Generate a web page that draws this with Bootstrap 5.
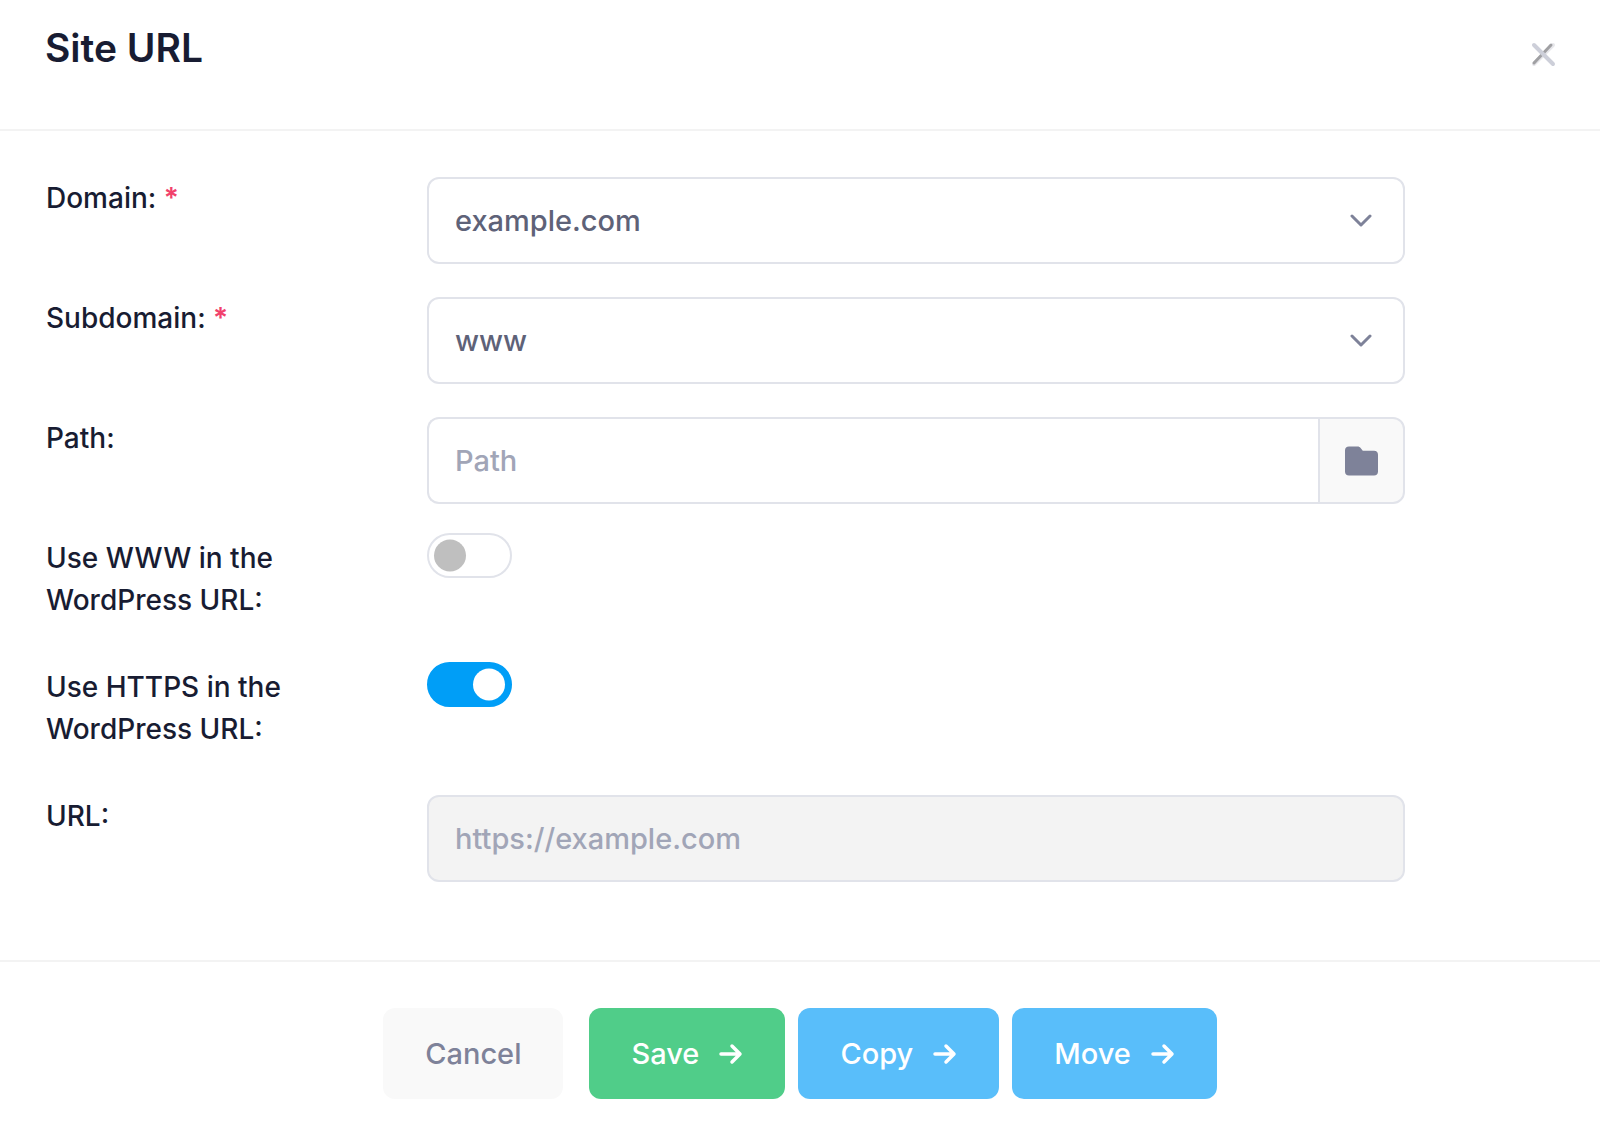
<!DOCTYPE html>
<html lang="en">
<head>
<meta charset="utf-8">
<meta name="viewport" content="width=device-width, initial-scale=1">
<title>Site URL</title>
<link href="https://cdn.jsdelivr.net/npm/bootstrap@5.3.0/dist/css/bootstrap.min.css" rel="stylesheet">
<style>
  :root {
    --ink: #181c32;
    --ink-soft: #5e6278;
    --ink-muted: #7e8299;
    --line: #e1e3ea;
    --rule: #f3f3f3;
  }
  body { font-family: Inter, "Liberation Sans", sans-serif; font-size: 28px; line-height: 42px; font-weight: 500; color: var(--ink); background: #fff; }
  .dialog-head { padding: 24px 44px 57px 45px; border-bottom: 2px solid var(--rule); }
  .dialog-title { font-size: 39px; line-height: 48px; font-weight: 600; color: var(--ink); }
  .dismiss { margin-top: 17px; line-height: 0; }
  .dialog-main { padding: 34px 38px 57px; }
  .dialog-main .row { --bs-gutter-x: 16px; margin-left: 0; margin-right: 0; padding-bottom: 21px; }
  .field-label { padding-top: 12px; padding-bottom: 12px; }
  .field-box { padding-top: 12px; padding-right: 30px; }
  .field-switch { padding-top: 8px; line-height: 0; }
  .required { color: #f1416c; font-weight: 600; }
  .field-box .form-control, .field-box .form-select {
    height: 87px; padding: 0 26px; font-size: 29px; line-height: 42px; font-weight: 500;
    color: var(--ink-soft); border: 2px solid var(--line); border-radius: 12px;
  }
  .field-box .form-select {
    background-image: url("data:image/svg+xml,%3csvg xmlns='http://www.w3.org/2000/svg' viewBox='0 0 24 14' fill='none' stroke='%237e8299' stroke-width='3' stroke-linecap='round' stroke-linejoin='round'%3e%3cpath d='M3 2l9 9 9-9'/%3e%3c/svg%3e");
    background-size: 24px 14px; background-position: right 30px center;
  }
  .field-box .form-control::placeholder { color: #a1a5b7; opacity: 1; }
  .field-box .form-control:disabled { color: #a1a5b7; background: #f3f3f3; }
  .field-box .input-group .form-control { border-top-right-radius: 0; border-bottom-right-radius: 0; border-right: 0; }
  .field-box .browse { width: 87px; margin-left: 0; padding: 0; border: 2px solid var(--line); border-radius: 12px; background: #f9f9f9; line-height: 0; }
  .field-switch .form-check-input {
    width: 85px; height: 45px; margin: 0; float: none; border: 2px solid var(--line); background-color: #fff;
    background-size: 46px 46px; border-radius: 23px; background-position: left -2px center;
    background-image: url("data:image/svg+xml,%3csvg xmlns='http://www.w3.org/2000/svg' viewBox='0 0 46 46'%3e%3ccircle cx='23' cy='23' r='16' fill='%23bfbfbf'/%3e%3c/svg%3e");
  }
  .field-switch .form-check-input:checked {
    border-color: #009ef7; background-color: #009ef7; background-position: right -2px center;
    background-image: url("data:image/svg+xml,%3csvg xmlns='http://www.w3.org/2000/svg' viewBox='0 0 46 46'%3e%3ccircle cx='23' cy='23' r='16' fill='white'/%3e%3c/svg%3e");
  }
  .dialog-foot { padding: 46px 38px 27px; border-top: 2px solid var(--rule); gap: 13px; }
  .dialog-foot .btn {
    --bs-btn-color: #fff; --bs-btn-hover-color: #fff; --bs-btn-border-width: 0;
    height: 91px; padding: 0 42px; font-size: 29px; line-height: 42px; font-weight: 500; border-radius: 12px;
  }
  .dialog-foot .act-cancel { --bs-btn-color: var(--ink-muted); --bs-btn-hover-color: var(--ink-muted); --bs-btn-bg: #f9f9f9; --bs-btn-hover-bg: #f1f1f1; margin-right: 13px; }
  .act-save { --bs-btn-bg: #50cd89; --bs-btn-hover-bg: #47be7d; }
  .act-blue { --bs-btn-bg: #59befa; --bs-btn-hover-bg: #3fb2f7; }
  .arrow { margin-left: 20px; }
</style>
<script src="https://cdn.jsdelivr.net/npm/bootstrap@5.3.0/dist/js/bootstrap.bundle.min.js" defer></script>
</head>
<body>
<form>
  <header class="dialog-head d-flex justify-content-between align-items-start">
    <h1 class="dialog-title mb-0">Site URL</h1>
    <button type="button" class="dismiss btn p-0 border-0" aria-label="Close">
      <svg width="26" height="26" viewBox="0 0 26 26" fill="none" stroke-linecap="round">
        <path d="M4 23L23 4" stroke="#e7e7eb" stroke-width="4"/>
        <path d="M4 22L21 4" stroke="#a0a0a3" stroke-width="3"/>
        <path d="M4 4L23 23" stroke="#cdcfd9" stroke-width="4"/>
      </svg>
    </button>
  </header>

  <main class="dialog-main">
    <div class="row">
      <label class="field-label col-3" for="domain">Domain: <span class="required">*</span></label>
      <div class="field-box col-8">
        <select class="form-select" id="domain" required><option>example.com</option></select>
      </div>
    </div>
    <div class="row">
      <label class="field-label col-3" for="subdomain">Subdomain: <span class="required">*</span></label>
      <div class="field-box col-8">
        <select class="form-select" id="subdomain" required><option>www</option></select>
      </div>
    </div>
    <div class="row">
      <label class="field-label col-3" for="path">Path:</label>
      <div class="field-box col-8">
        <div class="input-group">
          <input type="text" class="form-control" id="path" placeholder="Path">
          <button type="button" class="browse btn" aria-label="Browse folders">
            <svg width="33" height="30" viewBox="0 0 33 30" fill="#7e8299"><path d="M4 0.5H12.5C14 0.5 14.8 1 15.6 2L17.8 4.8H29C31.5 4.8 33 6.3 33 8.8V25.500C33 28 31.500 29.500 29 29.500H4C1.500 29.500 0 28 0 25.500V4.500C0 2 1.500 0.500 4 0.500Z"/></svg>
          </button>
        </div>
      </div>
    </div>
    <div class="row">
      <label class="field-label col-3" for="use-www">Use WWW in the WordPress URL:</label>
      <div class="field-switch form-switch col-8 ps-2"><input class="form-check-input" type="checkbox" role="switch" id="use-www"></div>
    </div>
    <div class="row">
      <label class="field-label col-3" for="use-https">Use HTTPS in the WordPress URL:</label>
      <div class="field-switch form-switch col-8 ps-2"><input class="form-check-input" type="checkbox" role="switch" id="use-https" checked></div>
    </div>
    <div class="row">
      <label class="field-label col-3" for="url">URL:</label>
      <div class="field-box col-8">
        <input type="text" class="form-control" id="url" value="https://example.com" disabled>
      </div>
    </div>
  </main>

  <footer class="dialog-foot d-flex justify-content-center">
    <button type="button" class="btn act-cancel">Cancel</button>
    <button type="submit" class="btn act-save d-flex align-items-center">Save
      <svg class="arrow" width="24" height="22" viewBox="0 0 24 22" fill="none" stroke="currentColor" stroke-width="3.500" stroke-linecap="round" stroke-linejoin="round"><path d="M2 11H20M13 3L21 11L13 19"/></svg></button>
    <button type="button" class="btn act-blue d-flex align-items-center">Copy
      <svg class="arrow" width="24" height="22" viewBox="0 0 24 22" fill="none" stroke="currentColor" stroke-width="3.500" stroke-linecap="round" stroke-linejoin="round"><path d="M2 11H20M13 3L21 11L13 19"/></svg></button>
    <button type="button" class="btn act-blue d-flex align-items-center">Move
      <svg class="arrow" width="24" height="22" viewBox="0 0 24 22" fill="none" stroke="currentColor" stroke-width="3.500" stroke-linecap="round" stroke-linejoin="round"><path d="M2 11H20M13 3L21 11L13 19"/></svg></button>
  </footer>
</form>
</body>
</html>
